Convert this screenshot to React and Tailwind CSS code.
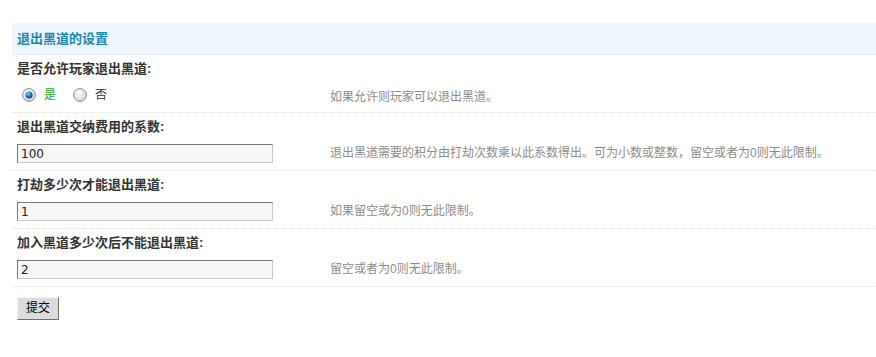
import React from 'react';

const font = { fontFamily: '"Liberation Sans", "Noto Sans CJK SC", sans-serif' };

function Radio({ checked }) {
  return (
    <svg width="14" height="14" viewBox="0 0 14 14" className="shrink-0">
      <defs>
        <radialGradient id={checked ? 'rg1' : 'rg0'} cx="40%" cy="35%" r="70%">
          <stop offset="0%" stopColor="#ffffff" />
          <stop offset="100%" stopColor="#cfcfcf" />
        </radialGradient>
        <radialGradient id="dot" cx="40%" cy="35%" r="70%">
          <stop offset="0%" stopColor="#7fd0f2" />
          <stop offset="60%" stopColor="#1273a8" />
          <stop offset="100%" stopColor="#0b3f66" />
        </radialGradient>
      </defs>
      <circle cx="7" cy="7" r="6.4" fill={`url(#${checked ? 'rg1' : 'rg0'})`} stroke="#8a8a8a" strokeWidth="1" />
      {checked && <circle cx="7" cy="7" r="3.6" fill="url(#dot)" />}
    </svg>
  );
}

function Field({ label, value, desc }) {
  return (
    <div className="border-b border-dotted border-[#dde5ea] pt-[4px] pb-[8px]">
      <div className="px-[5px] h-[20px] leading-[20px] text-[13px] font-bold text-[#333]">{label}</div>
      <div className="flex items-center mt-[6px] h-[19px]">
        <div className="w-[318px] pl-[5px] shrink-0">
          <input
            readOnly
            value={value}
            className="w-[256px] h-[19px] bg-[#f7f7f7] border border-t-[#7a7a7a] border-l-[#7a7a7a] border-r-[#c8c8c8] border-b-[#c8c8c8] px-[3px] text-[12px] text-[#222] outline-none"
            style={{ fontFamily: '"DejaVu Sans", sans-serif' }}
          />
        </div>
        <div className="text-[12px] text-[#8c8c8c]">{desc}</div>
      </div>
    </div>
  );
}

export default function App() {
  return (
    <div className="w-[876px] h-[357px] bg-white pt-[23px] pl-[12px]" style={font}>
      <div className="h-[32px] bg-[#eff6fc] border-b border-dotted border-[#dde5ea] flex items-center px-[5px]">
        <span className="text-[13px] font-bold text-[#1689b8]">退出黑道的设置</span>
      </div>

      <div className="border-b border-dotted border-[#dde5ea] pt-[4px] pb-[8px]">
        <div className="px-[5px] h-[20px] leading-[20px] text-[13px] font-bold text-[#333]">是否允许玩家退出黑道:</div>
        <div className="flex items-center mt-[6px] h-[19px]">
          <div className="w-[318px] pl-[10px] shrink-0 flex items-center text-[12px]">
            <Radio checked />
            <span className="ml-[8px] text-[#22aa22]">是</span>
            <span className="ml-[17px]"><Radio /></span>
            <span className="ml-[8px] text-[#333]">否</span>
          </div>
          <div className="text-[12px] text-[#8c8c8c] pt-[4px]">如果允许则玩家可以退出黑道。</div>
        </div>
      </div>

      <Field label="退出黑道交纳费用的系数:" value="100" desc="退出黑道需要的积分由打劫次数乘以此系数得出。可为小数或整数，留空或者为0则无此限制。" />
      <Field label="打劫多少次才能退出黑道:" value="1" desc="如果留空或为0则无此限制。" />
      <Field label="加入黑道多少次后不能退出黑道:" value="2" desc="留空或者为0则无此限制。" />

      <div className="pt-[8px] pl-[5px]">
        <button className="w-[42px] h-[23px] bg-[#dcdcdc] border border-t-[#f4f4f4] border-l-[#f4f4f4] border-r-[#6f6f6f] border-b-[#6f6f6f] text-[12px] text-black">
          提交
        </button>
      </div>
    </div>
  );
}
